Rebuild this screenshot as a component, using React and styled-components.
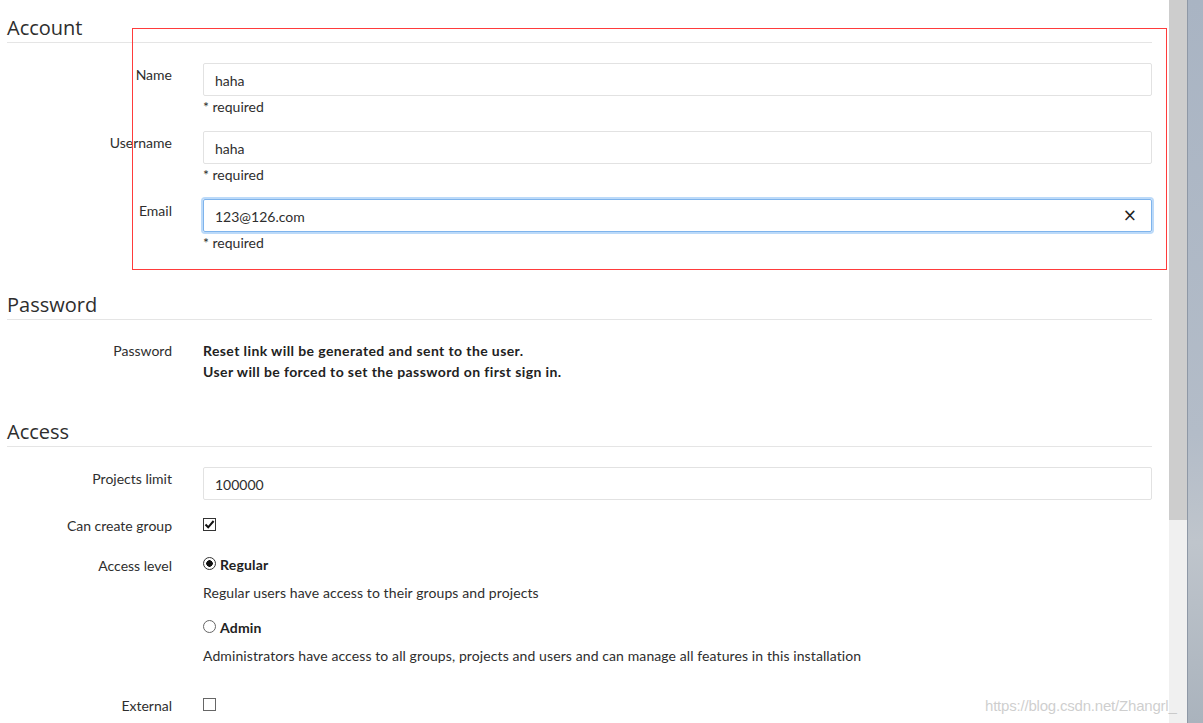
import styled, { createGlobalStyle } from 'styled-components'

const GlobalStyle = createGlobalStyle`
  html, body {
    margin: 0;
    padding: 0;
    background: #fff;
    overflow: hidden;
  }
  body {
    font-family: Lato, "Open Sans", sans-serif;
    font-size: 14px;
    color: #2e2e2e;
  }
`

function CheckIcon() {
  return (
    <svg width='11' height='11' viewBox='0 0 11 11'>
      <path d='M1.5 5.5 L4.2 8.3 L9.6 2' fill='none' stroke='#111' strokeWidth='2' />
    </svg>
  )
}

function App() {
  return (
    <>
      <GlobalStyle />
      <Screen>
        <Main>
          <Heading>Account</Heading>
          <Row $top={20}>
            <Label>Name</Label>
            <Field>
              <Input>haha</Input>
              <Help>* required</Help>
            </Field>
          </Row>
          <Row $top={14}>
            <Label>Username</Label>
            <Field>
              <Input>haha</Input>
              <Help>* required</Help>
            </Field>
          </Row>
          <Row $top={14}>
            <Label>Email</Label>
            <Field>
              <Input $focus>
                123@126.com
                <Clear>×</Clear>
              </Input>
              <Help>* required</Help>
            </Field>
          </Row>

          <Heading $top={39}>Password</Heading>
          <Row $top={20}>
            <Label $pad={0}>Password</Label>
            <Field>
              <Strong>Reset link will be generated and sent to the user.</Strong>
              <Strong>User will be forced to set the password on first sign in.</Strong>
            </Field>
          </Row>

          <Heading $top={37}>Access</Heading>
          <Row $top={20}>
            <Label>Projects limit</Label>
            <Field>
              <Input>100000</Input>
            </Field>
          </Row>
          <Row $top={14}>
            <Label>Can create group</Label>
            <Field>
              <Check $checked>
                <CheckIcon />
              </Check>
            </Field>
          </Row>
          <Row $top={18}>
            <Label>Access level</Label>
            <Field>
              <Option>
                <Radio $checked />
                Regular
              </Option>
              <Note>Regular users have access to their groups and projects</Note>
              <Option $top={14}>
                <Radio />
                Admin
              </Option>
              <Note>
                Administrators have access to all groups, projects and users and can manage all
                features in this installation
              </Note>
            </Field>
          </Row>
          <Row $top={28}>
            <Label>External</Label>
            <Field>
              <Check />
              <Note $top={8}>
                External users cannot see internal or private projects unless access is explicitly
                granted. Also, external users cannot create projects or groups.
              </Note>
            </Field>
          </Row>
        </Main>
        <ScrollBar>
          <Thumb />
        </ScrollBar>
        <Desktop />
        <Marker />
        <Watermark>https://blog.csdn.net/Zhangrl_</Watermark>
      </Screen>
    </>
  )
}

export default App

const Screen = styled.div`
  position: relative;
  display: flex;
  width: 1203px;
  height: 723px;
  overflow: hidden;
`
const Main = styled.div`
  flex: 1;
  padding: 15px 17px 0 7px;
  background: #fff;
`
const Heading = styled.h3`
  margin: ${(p) => p.$top || 0}px 0 0;
  font-family: "Open Sans", Lato, sans-serif;
  font-size: 20px;
  font-weight: 400;
  line-height: 26px;
  color: #2e2e2e;
  padding-bottom: 1px;
  border-bottom: 1px solid #e5e5e5;
`
const Row = styled.div`
  display: grid;
  grid-template-columns: 165px 1fr;
  column-gap: 31px;
  margin-top: ${(p) => p.$top || 0}px;
`
const Label = styled.div`
  text-align: right;
  line-height: 21px;
  padding-top: ${(p) => (p.$pad === undefined ? 1 : p.$pad)}px;
  color: #2e2e2e;
`
const Field = styled.div`
  display: flex;
  flex-direction: column;
  align-items: flex-start;
`
const Input = styled.div`
  box-sizing: border-box;
  position: relative;
  width: 100%;
  height: 33px;
  padding: 1px 11px 0;
  display: flex;
  align-items: center;
  border: 1px solid ${(p) => (p.$focus ? '#7fb4ec' : '#e2e2e2')};
  border-radius: 2px;
  box-shadow: ${(p) => (p.$focus ? '0 0 0 2px #bcdaf9' : 'none')};
  color: #2e2e2e;
`
const Clear = styled.span`
  position: absolute;
  right: 14px;
  top: 6px;
  font-family: "DejaVu Sans", sans-serif;
  font-size: 17px;
  line-height: 18px;
  color: #222;
`
const Help = styled.div`
  margin-top: 1px;
  line-height: 20px;
  color: #2e2e2e;
`
const Strong = styled.div`
  font-weight: 700;
  line-height: 21px;
  letter-spacing: 0.4px;
  color: #222;
`
const Check = styled.span`
  box-sizing: border-box;
  width: 13px;
  height: 13px;
  margin-top: 4px;
  border: 1px solid ${(p) => (p.$checked ? '#333' : '#666')};
  display: flex;
  align-items: center;
  justify-content: center;
  background: #fff;
`
const Option = styled.div`
  display: flex;
  align-items: center;
  gap: 4px;
  margin-top: ${(p) => p.$top || 0}px;
  font-weight: 700;
  line-height: 21px;
  letter-spacing: 0.2px;
  color: #222;
`
const Radio = styled.span`
  box-sizing: border-box;
  width: 13px;
  height: 13px;
  border-radius: 50%;
  border: 1px solid ${(p) => (p.$checked ? '#333' : '#666')};
  background: ${(p) => (p.$checked ? 'radial-gradient(circle, #111 0 3px, #fff 3.5px)' : '#fff')};
  margin-top: -3px;
`
const Note = styled.div`
  margin-top: ${(p) => p.$top || 7}px;
  line-height: 21px;
  letter-spacing: 0.1px;
  color: #2e2e2e;
  white-space: nowrap;
`
const ScrollBar = styled.div`
  width: 18px;
  background: #f0f0f0;
`
const Thumb = styled.div`
  height: 520px;
  background: #cdcdcd;
`
const Desktop = styled.div`
  width: 15px;
  background: linear-gradient(180deg, #a9b4c3 0%, #b3bcc8 60%, #bfc5cc 75%, #aab3bd 100%);
  border-left: 1px solid #8e98a6;
`
const Marker = styled.div`
  position: absolute;
  left: 132px;
  top: 28px;
  width: 1035px;
  height: 242px;
  border: 1px solid #ff3b3b;
  box-sizing: border-box;
  pointer-events: none;
`
const Watermark = styled.div`
  position: absolute;
  left: 985px;
  top: 697px;
  font-family: "Liberation Sans", Arial, sans-serif;
  font-size: 15px;
  color: rgba(190, 190, 190, 0.75);
  letter-spacing: -0.2px;
`
